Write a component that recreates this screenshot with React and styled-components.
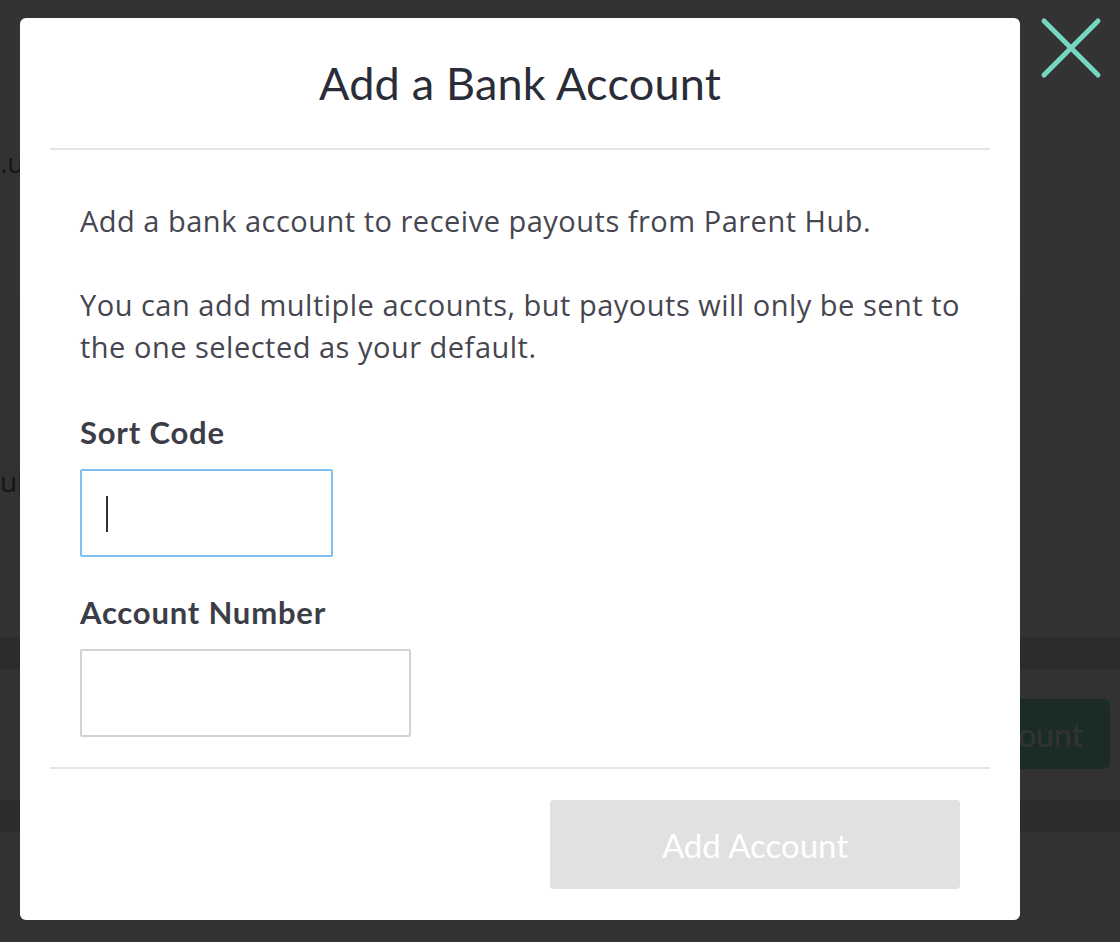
import React from "react";
import styled, { createGlobalStyle } from "styled-components";

const Global = createGlobalStyle`
  html, body { margin: 0; padding: 0; }
  body { font-family: "Open Sans", "Liberation Sans", sans-serif; background: #fafafa; overflow: hidden; }
  * { box-sizing: border-box; }
`;

/* ---------- page behind the overlay ---------- */
const Page = styled.div`
  height: 942px;
  display: flex;
  flex-direction: column;
  background: #fafafa;
`;
const Section = styled.div`
  height: ${(p) => p.$h}px;
  background: ${(p) => p.$bg || "#fafafa"};
  display: flex;
  align-items: ${(p) => p.$align || "center"};
  justify-content: ${(p) => p.$justify || "flex-start"};
  padding: ${(p) => p.$pad || "0"};
  border-bottom: ${(p) => (p.$line ? "1px solid #eee" : "none")};
`;
const PageText = styled.span`
  font-family: "Open Sans", sans-serif;
  font-size: 28px;
  color: #6a6a6a;
  padding-top: ${(p) => p.$top || 0}px;
`;
const PageButton = styled.div`
  height: 70px;
  width: 300px;
  border-radius: 6px;
  background: #87d7c3;
  color: #fff;
  font-family: Lato, sans-serif;
  font-size: 32px;
  display: flex;
  align-items: center;
  justify-content: flex-end;
  padding-right: 27px;
`;

/* ---------- overlay & modal ---------- */
const Overlay = styled.div`
  position: fixed;
  inset: 0;
  background: rgba(0, 0, 0, 0.8);
  display: flex;
  align-items: flex-start;
  padding: 18px 0 0 20px;
`;
const Modal = styled.div`
  width: 1000px;
  height: 902px;
  background: #fff;
  border-radius: 6px;
  padding: 0 30px;
  display: flex;
  flex-direction: column;
`;
const Header = styled.div`
  height: 132px;
  display: flex;
  align-items: center;
  justify-content: center;
  border-bottom: 2px solid #e5e5e5;
`;
const Title = styled.h1`
  margin: 0;
  font-family: Lato, sans-serif;
  font-weight: 400;
  font-size: 45px;
  color: #2a2c37;
  letter-spacing: 0.2px;
`;
const Body = styled.div`
  padding: 50px 30px 30px;
  border-bottom: 2px solid #e5e5e5;
  display: flex;
  flex-direction: column;
`;
const Para = styled.p`
  margin: 0 0 42px;
  font-size: 29px;
  letter-spacing: 0.5px;
  line-height: 42px;
  color: #45464f;
`;
const Label = styled.label`
  font-family: Lato, sans-serif;
  font-weight: 700;
  font-size: 31px;
  letter-spacing: 0.8px;
  line-height: 44px;
  color: #3b3d47;
  margin-top: ${(p) => p.$mt || 0}px;
  margin-bottom: 15px;
`;
const Field = styled.div`
  position: relative;
  width: ${(p) => p.$w}px;
  height: 88px;
`;
const Input = styled.input`
  width: 100%;
  height: 100%;
  border: 2px solid ${(p) => (p.$focus ? "#80c0f0" : "#d2d2d2")};
  border-radius: 2px;
  padding: 0 25px;
  font-size: 28px;
  font-family: "Open Sans", sans-serif;
  outline: none;
  caret-color: transparent;
  background: #fff;
`;
const Caret = styled.span`
  position: absolute;
  left: 26px;
  top: 27px;
  width: 2px;
  height: 36px;
  background: #333;
`;
const Footer = styled.div`
  flex: 1;
  display: flex;
  justify-content: flex-end;
  align-items: flex-start;
  padding: 31px 30px 0;
`;
const Button = styled.button`
  width: 410px;
  height: 89px;
  border: none;
  border-radius: 4px;
  background: #e1e1e1;
  color: #fff;
  font-family: Lato, sans-serif;
  font-size: 33px;
  font-weight: 400;
  cursor: default;
`;
const Close = styled.button`
  position: fixed;
  top: 17px;
  right: 18px;
  width: 62px;
  height: 62px;
  border: none;
  background: transparent;
  padding: 0;
`;

export default function App() {
  return (
    <>
      <Global />
      <Page>
        <Section $h={305} $bg="#fff" $line>
          <PageText $top={20}>.uk</PageText>
        </Section>
        <Section $h={333}>
          <PageText $top={20}>ult</PageText>
        </Section>
        <Section $h={32} $bg="#dcdcdc" />
        <Section $h={132} $justify="flex-end" $pad="0 10px 0 0">
          <PageButton>Add Account</PageButton>
        </Section>
        <Section $h={32} $bg="#dcdcdc" />
        <Section $h={110} />
      </Page>
      <Overlay>
        <Modal role="dialog" aria-label="Add a Bank Account">
          <Header>
            <Title>Add a Bank Account</Title>
          </Header>
          <Body>
            <Para>Add a bank account to receive payouts from Parent Hub.</Para>
            <Para>
              You can add multiple accounts, but payouts will only be sent to
              the one selected as your default.
            </Para>
            <Label htmlFor="sort">Sort Code</Label>
            <Field $w={253}>
              <Input id="sort" $focus />
              <Caret />
            </Field>
            <Label htmlFor="acct" $mt={33}>Account Number</Label>
            <Field $w={331}>
              <Input id="acct" />
            </Field>
          </Body>
          <Footer>
            <Button>Add Account</Button>
          </Footer>
        </Modal>
        <Close aria-label="Close">
          <svg width="62" height="62" viewBox="0 0 62 62">
            <path
              d="M4 4 L58 58 M58 4 L4 58"
              stroke="#76d6c2"
              strokeWidth="5"
              strokeLinecap="round"
              fill="none"
            />
          </svg>
        </Close>
      </Overlay>
    </>
  );
}
